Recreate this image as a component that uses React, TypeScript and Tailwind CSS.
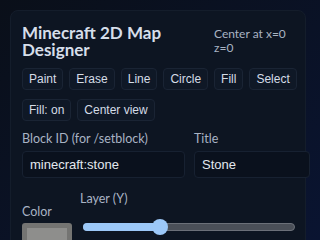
import React from "react";

const btn =
  "h-[22px] px-[6px] rounded-[4px] bg-[#0f1826] border border-[#1a2434] text-[12px] text-[#d5dce6] leading-none flex items-center shrink-0";

export default function App() {
  return (
    <div className="w-[320px] h-[240px] overflow-hidden bg-gradient-to-br from-[#0a0f19] to-[#0a1431] pt-[10px] pl-[10px]">
      <div
        className="w-[296px] h-[260px] rounded-[8px] bg-[#0d1522] border border-[#141d2b] pl-[11px] pt-[13px]"
        style={{ fontFamily: "Lato, 'Noto Sans', sans-serif" }}
      >
        <div className="flex items-start">
          <div className="text-[17px] font-bold leading-[17px] text-[#d6deea] w-[192px] shrink-0">
            Minecraft 2D Map Designer
          </div>
          <div className="text-[12px] leading-[14px] text-[#a9b3c2] w-[90px] mt-[3px] shrink-0">
            Center at x=0 z=0
          </div>
        </div>
        <div
          className="flex flex-wrap gap-x-[6px] gap-y-[9px] mt-[10px] w-[290px]"
          style={{ fontFamily: "'Liberation Sans', Arial, sans-serif" }}
        >
          <div className={btn}>Paint</div>
          <div className={btn}>Erase</div>
          <div className={btn}>Line</div>
          <div className={btn}>Circle</div>
          <div className={btn}>Fill</div>
          <div className={btn}>Select</div>
          <div className={btn}>Fill: on</div>
          <div className={btn}>Center view</div>
        </div>
        <div className="flex gap-[9px] mt-[10px]">
          <div className="w-[163px] shrink-0">
            <div className="text-[12.5px] text-[#a9b3c4] leading-[16px]">Block ID (for /setblock)</div>
            <div
              className="mt-[4px] h-[27px] rounded-[4px] bg-[#0a111d] border border-[#172131] px-[7px] flex items-center text-[13px] text-[#e3e8ef]"
              style={{ fontFamily: "'Liberation Sans', Arial, sans-serif" }}
            >
              minecraft:stone
            </div>
          </div>
          <div className="w-[116px] shrink-0">
            <div className="text-[12.5px] text-[#a9b3c4] leading-[16px]">Title</div>
            <div
              className="mt-[4px] h-[27px] rounded-[4px] bg-[#0a111d] border border-[#172131] px-[7px] flex items-center text-[13px] text-[#e3e8ef]"
              style={{ fontFamily: "'Liberation Sans', Arial, sans-serif" }}
            >
              Stone
            </div>
          </div>
        </div>
        <div className="flex mt-[13px]">
          <div className="w-[58px] shrink-0 pt-[13px]">
            <div className="text-[12.5px] text-[#a9b3c4] leading-[16px]">Color</div>
            <div className="mt-[3px] w-[50px] h-[30px] rounded-[3px] bg-[#747472] p-[5px]">
              <div className="w-full h-full bg-[#8e8e8c]" />
            </div>
          </div>
          <div className="w-[216px] shrink-0">
            <div className="text-[12.5px] text-[#a9b3c4] leading-[16px]">Layer (Y)</div>
            <div className="relative mt-[16px] ml-[3px] h-[8px] w-[212px] rounded-full bg-[#4a4f58] border border-[#6b7079]">
              <div className="absolute left-[-1px] top-[-1px] h-[8px] w-[78px] rounded-full bg-[#9cc8f8]" />
              <div className="absolute left-[68px] top-[-5px] w-[16px] h-[16px] rounded-full bg-[#9cc8f8]" />
            </div>
          </div>
        </div>
      </div>
    </div>
  );
}
